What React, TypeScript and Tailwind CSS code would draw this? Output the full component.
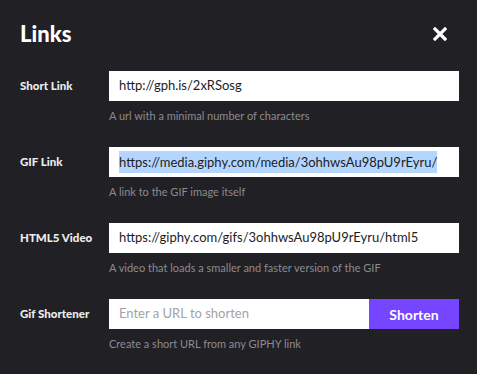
import React from "react";

function Row({ label, children, help }: { label: string; children: React.ReactNode; help: string }) {
  return (
    <div className="mb-[23px]">
      <div className="flex items-center h-[30px]">
        <div className="w-[89px] shrink-0 text-[11.5px] font-black text-[#ececec]" style={{ fontFamily: "Lato, 'Noto Sans', sans-serif" }}>
          {label}
        </div>
        <div className="w-[350px] h-[30px] flex">{children}</div>
      </div>
      <div className="ml-[89px] mt-[7px] text-[11px] leading-[16px] text-[#8c8b90]">{help}</div>
    </div>
  );
}

export default function App() {
  return (
    <div className="w-[477px] h-[374px] bg-[#212025] pl-[20px] pt-[20px] overflow-hidden" style={{ fontFamily: "Lato, 'Noto Sans', sans-serif" }}>
      <div className="flex items-center justify-between h-[28px] mb-[23px] pr-[30px]">
        <div className="text-[22px] font-black text-white leading-[28px]">Links</div>
        <svg width="14" height="14" viewBox="0 0 14 14" className="mt-[-1px]">
          <path d="M2 2 L12 12 M12 2 L2 12" stroke="white" strokeWidth="3.2" strokeLinecap="square" />
        </svg>
      </div>
      <Row label="Short Link" help="A url with a minimal number of characters">
        <div className="flex-1 bg-white pl-[10px] flex items-center text-[13px] text-[#1d1d1f]">http://gph.is/2xRSosg</div>
      </Row>
      <Row label="GIF Link" help="A link to the GIF image itself">
        <div className="flex-1 bg-white pl-[10px] flex items-center text-[13px] text-[#1d1d1f] overflow-hidden whitespace-nowrap">
          <span className="bg-[#b4d5fe] leading-[22px]">https://media.giphy.com/media/3ohhwsAu98pU9rEyru/</span>
        </div>
      </Row>
      <Row label="HTML5 Video" help="A video that loads a smaller and faster version of the GIF">
        <div className="flex-1 bg-white pl-[10px] flex items-center text-[13px] text-[#1d1d1f] whitespace-nowrap">https://giphy.com/gifs/3ohhwsAu98pU9rEyru/html5</div>
      </Row>
      <Row label="Gif Shortener" help="Create a short URL from any GIPHY link">
        <div className="flex-1 bg-white pl-[10px] flex items-center text-[13px] text-[#a3a3a6]">Enter a URL to shorten</div>
        <div className="w-[90px] bg-[#7645ff] flex items-center justify-center text-[14px] font-bold text-white">Shorten</div>
      </Row>
    </div>
  );
}
